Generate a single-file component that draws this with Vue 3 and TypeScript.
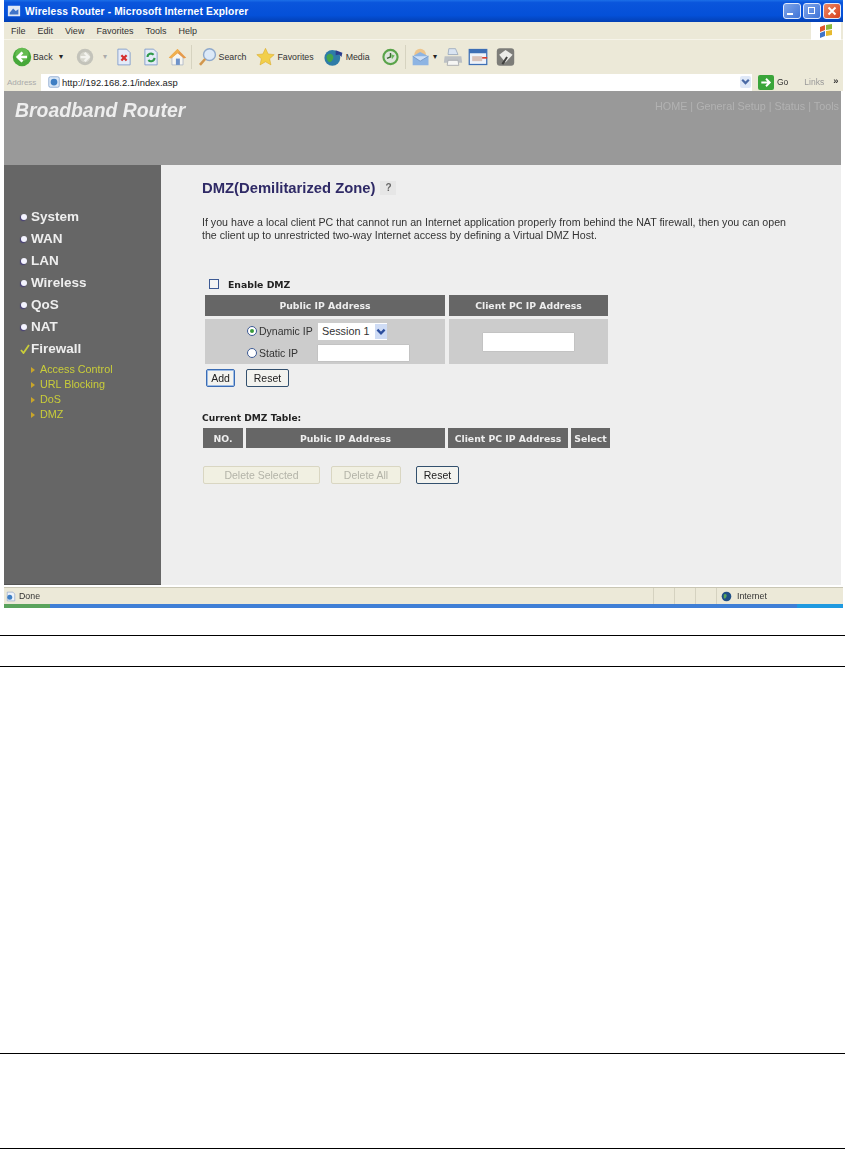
<script setup lang="ts">
const menus: string[] = ['File', 'Edit', 'View', 'Favorites', 'Tools', 'Help']
const navItems: string[] = ['System', 'WAN', 'LAN', 'Wireless', 'QoS', 'NAT']
const subItems: string[] = ['Access Control', 'URL Blocking', 'DoS', 'DMZ']
</script>

<template>
  <div class="page">
    <div class="window">
      <div class="titlebar">
        <svg class="ti" viewBox="0 0 16 16"><rect x="1" y="2" width="14" height="12" fill="#dfe8f5" /><path d="M3 10l4-5 3 3 3-2v6H3z" fill="#3f74c9" /></svg>
        <span class="ttext">Wireless Router - Microsoft Internet Explorer</span>
        <div class="wbtns">
          <span class="wb blue"><i class="min"></i></span>
          <span class="wb blue"><i class="res"></i></span>
          <span class="wb red">
            <svg viewBox="0 0 16 16"><path d="M4 4l8 8M12 4l-8 8" stroke="#fff" stroke-width="2.2" /></svg>
          </span>
        </div>
      </div>

      <div class="menubar">
        <span v-for="m in menus" :key="m" class="menu">{{ m }}</span>
        <div class="flag">
          <svg viewBox="0 0 16 16" width="16" height="16">
            <path d="M2 4l5-2v5l-5 2z" fill="#e0552c" /><path d="M8 2l6-1v5l-6 1z" fill="#8ab83a" />
            <path d="M2 10l5-2v5l-5 2z" fill="#3f74c9" /><path d="M8 8l6-1v5l-6 1z" fill="#e6b92e" />
          </svg>
        </div>
      </div>

      <div class="toolbar">
        <svg class="i-back" viewBox="0 0 24 24"><circle cx="12" cy="12" r="11" fill="#47a83a" /><circle cx="12" cy="9" r="8" fill="#7bcb62" opacity=".55" /><path d="M18 12H8M12.500 6.500L7 12l5.500 5.500" stroke="#fff" stroke-width="3.200" fill="none" /></svg>
        <span class="tlabel l-back">Back</span><span class="caret c-back">▾</span>
        <svg class="i-fwd" viewBox="0 0 24 24"><circle cx="12" cy="12" r="11" fill="#c3c3ba" /><circle cx="12" cy="12" r="7" fill="#d7d7ce" /><path d="M6 12h10M11.500 6.500L17 12l-5.500 5.500" stroke="#f3f3ee" stroke-width="3" fill="none" /></svg>
        <span class="caret dim c-fwd">▾</span>
        <svg class="i-stop" viewBox="0 0 16 20"><path d="M1 1h10l4 4v14H1z" fill="#e4ebf8" stroke="#7f9ccb" /><path d="M5 8l6 6M11 8l-6 6" stroke="#d62f2f" stroke-width="2.600" /></svg>
        <svg class="i-ref" viewBox="0 0 16 20"><path d="M1 1h10l4 4v14H1z" fill="#e4ebf8" stroke="#7f9ccb" /><path d="M4 10a4 4 0 0 1 7-2.500M12 11a4 4 0 0 1-7 2.500" stroke="#2f9a4a" stroke-width="2.400" fill="none" /></svg>
        <svg class="i-home" viewBox="0 0 24 24"><path d="M5 12l7-6 7 6v10H5z" fill="#f7f6f0" stroke="#a9b4c6" /><path d="M10 14h5v8h-5z" fill="#6f93c9" /><path d="M1 13L12 2l11 11-3 1-8-7-8 7z" fill="#e69a4b" /><path d="M1 13L12 2l3 3-10 8z" fill="#f0b04f" /></svg>
        <i class="sep s-a"></i>
        <svg class="i-search" viewBox="0 0 24 24"><circle cx="14.500" cy="9" r="7.500" fill="#dce9f8" stroke="#8fa9cb" stroke-width="1.800" /><path d="M9 14.500L2.500 22" stroke="#d2974d" stroke-width="3.200" /></svg>
        <span class="tlabel l-gap">Search</span>
        <svg class="i-star" viewBox="0 0 24 24"><path d="M12 1l3.300 7.200 7.700.8-5.800 5.200 1.700 7.800L12 18l-6.900 4 1.700-7.800L1 9l7.700-.8z" fill="#f2cf4a" stroke="#d9a92a" stroke-width=".7" /></svg>
        <span class="tlabel l-gap">Favorites</span>
        <svg class="i-media" viewBox="0 0 24 24"><circle cx="10" cy="13" r="9.500" fill="#2e7ca8" /><path d="M3 11c3-5 7-3 8 0s-2 7-4 7-4-3-4-7z" fill="#45a64a" /><path d="M14 4l8 3-1 5-3-3-4 1z" fill="#2b3f8f" /></svg>
        <span class="tlabel l-gap">Media</span>
        <svg class="i-hist" viewBox="0 0 24 24"><circle cx="12" cy="12" r="10" fill="#dfe5dc" stroke="#5aa44a" stroke-width="3" /><path d="M12 6.500V12l-5 2" stroke="#3f6a35" stroke-width="2" fill="none" /><path d="M13 8l5 2-4 5z" fill="#67b85a" /></svg>
        <i class="sep s-b"></i>
        <svg class="i-mail" viewBox="0 0 24 24"><circle cx="11" cy="9" r="7" fill="#edc58d" /><path d="M2 11l9-5 10 5v11H2z" fill="#8db4e3" /><path d="M2 11l9 6 10-6" fill="#cfe0f5" stroke="#6d93c4" /></svg>
        <span class="caret c-mail">▾</span>
        <svg class="i-print" viewBox="0 0 24 24"><path d="M7 2h8l3 7H6z" fill="#d9e4f2" stroke="#9aa9bd" /><path d="M2 11h20l1 8H1z" fill="#bcc0c4" /><path d="M6 16h12l1 6H5z" fill="#f6f6f4" stroke="#a3a7ab" /></svg>
        <svg class="i-edit" viewBox="0 0 24 24"><rect x="1.500" y="3" width="21" height="18" fill="#eef3fa" stroke="#3d6fb5" stroke-width="1.500" /><rect x="1.500" y="3" width="21" height="4.500" fill="#3d6fb5" /><path d="M5 11h12v6H5z" fill="#d8c1b8" /><path d="M17 13h6" stroke="#d9402f" stroke-width="2" /></svg>
        <svg class="i-msg" viewBox="0 0 24 24"><rect x="1" y="1" width="22" height="22" rx="4" fill="#7d7d79" /><path d="M4 9l8-6 9 6-9 10z" fill="#ecece8" /><path d="M8 21l6-9" stroke="#3f3f3d" stroke-width="2.500" /></svg>
      </div>

      <div class="addressbar">
        <span class="addr">Address</span>
        <div class="urlbox">
          <svg class="ie" viewBox="0 0 16 16"><rect x="1" y="1" width="14" height="14" rx="2" fill="#dbe8f7" stroke="#7f9fc9" /><circle cx="8" cy="8" r="4.500" fill="#3f7fc4" /></svg>
          <span class="url">http://192.168.2.1/index.asp</span>
          <span class="drop">
            <svg viewBox="0 0 10 10"><path d="M2 3l3 3 3-3" stroke="#4a6aa5" stroke-width="2" fill="none" /></svg>
          </span>
        </div>
        <span class="go">
          <svg viewBox="0 0 16 16"><path d="M3 8h9M8 4l4 4-4 4" stroke="#fff" stroke-width="2" fill="none" /></svg>
        </span>
        <span class="golabel">Go</span>
        <span class="links">Links</span>
        <span class="more">»</span>
      </div>

      <div class="header">
        <span class="brand">Broadband Router</span>
        <span class="topnav">HOME | General Setup | Status | Tools</span>
      </div>

      <div class="main">
        <aside class="sidebar">
          <ul class="nav">
            <li v-for="n in navItems" :key="n"><i class="dot"></i>{{ n }}</li>
            <li>
              <svg class="check" viewBox="0 0 10 10"><path d="M1 6l2.500 3L9 1" stroke="#c9cd3a" stroke-width="1.800" fill="none" /></svg>Firewall
            </li>
          </ul>
          <ul class="subnav">
            <li v-for="s in subItems" :key="s"><i class="tri"></i>{{ s }}</li>
          </ul>
        </aside>

        <section class="content">
          <div class="heading">
            <h1>DMZ(Demilitarized Zone)</h1>
            <span class="help">?</span>
          </div>
          <p class="intro">
            If you have a local client PC that cannot run an Internet application properly from behind the NAT firewall, then you can open<br />
            the client up to unrestricted two-way Internet access by defining a Virtual DMZ Host.
          </p>

          <div class="form">
            <label class="enable"><i class="cb"></i><span>Enable DMZ</span></label>
            <div class="grid1">
              <div class="th">Public IP Address</div>
              <div class="th">Client PC IP Address</div>
              <div class="cell left">
                <div class="ipgrid">
                  <span class="radioline"><i class="radio on"></i>Dynamic IP</span>
                  <span class="select">Session 1<i class="selbtn"><svg viewBox="0 0 10 10"><path d="M2 3.500l3 3 3-3" stroke="#2d4f9e" stroke-width="2" fill="none" /></svg></i></span>
                  <span class="radioline"><i class="radio"></i>Static IP</span>
                  <span class="input wide"></span>
                </div>
              </div>
              <div class="cell center"><span class="input client"></span></div>
            </div>
            <div class="btnrow">
              <button class="btn primary" type="button">Add</button>
              <button class="btn" type="button">Reset</button>
            </div>

            <div class="tabletitle">Current DMZ Table:</div>
            <div class="grid2">
              <div class="th">NO.</div>
              <div class="th">Public IP Address</div>
              <div class="th">Client PC IP Address</div>
              <div class="th">Select</div>
            </div>
            <div class="btnrow2">
              <button class="btn disabled ds" type="button">Delete Selected</button>
              <button class="btn disabled da" type="button">Delete All</button>
              <button class="btn" type="button">Reset</button>
            </div>
          </div>
        </section>
      </div>

      <div class="statusbar">
        <svg class="ie st" viewBox="0 0 16 16"><path d="M2 1h9l3 3v11H2z" fill="#eef3fa" stroke="#8aa0c8" /><circle cx="6" cy="9" r="4" fill="#3f7fc4" /></svg>
        <span class="done">Done</span>
        <div class="panes"><i></i><i></i><i></i></div>
        <div class="zone">
          <svg viewBox="0 0 16 16" width="11" height="11"><circle cx="8" cy="8" r="7" fill="#1f4f86" /><path d="M4 5c3-2 5 0 4 3s-3 4-4 2z" fill="#5aa65a" /></svg>
          <span>Internet</span>
        </div>
      </div>
      <div class="taskstrip"><i class="startpart"></i><i class="traypart"></i></div>
    </div>

    <div class="rules">
      <div class="rule r1"></div>
      <div class="rule r2"></div>
      <div class="rule r3"></div>
      <div class="rule r4"></div>
    </div>
  </div>
</template>

<style>
html, body { margin: 0; background: #fff; }
</style>

<style scoped>
.page {
  width: 845px;
  height: 1149px;
  overflow: hidden;
  background: #fff;
  font-family: "Liberation Sans", Arial, sans-serif;
}
.window {
  margin-left: 4px;
  width: 839px;
  height: 608px;
  display: flex;
  flex-direction: column;
  filter: blur(0.55px);
}
.titlebar {
  height: 22px;
  flex: none;
  display: flex;
  align-items: center;
  padding-left: 3px;
  background: linear-gradient(#1c6fe8 0, #0a55dc 12%, #0450d8 70%, #0340b4 100%);
  color: #fff;
}
.ti { width: 14px; height: 14px; margin-right: 4px; }
.ttext { font-size: 10.200px; font-weight: 700; letter-spacing: .15px; }
.wbtns { margin-left: auto; display: flex; gap: 2px; padding-right: 2px; }
.wb { width: 18px; height: 16px; border-radius: 3px; border: 1px solid #dfe9fb; box-sizing: border-box; position: relative; display: block; }
.wb.blue { background: linear-gradient(135deg, #7fa5e8, #3f74d8); }
.wb.red { background: linear-gradient(135deg, #ec8a66, #d83f1c); }
.wb svg { width: 100%; height: 100%; display: block; }
.min { position: absolute; left: 3px; bottom: 3px; width: 6px; height: 2px; background: #fff; }
.res { position: absolute; left: 4px; top: 3px; width: 7px; height: 7px; border: 1.500px solid #fff; box-sizing: border-box; }
.menubar {
  height: 18px;
  flex: none;
  display: flex;
  align-items: center;
  padding-left: 7px;
  gap: 12px;
  background: #ece9d8;
  font-size: 9px;
  color: #333;
  border-bottom: 1px solid #f6f4ea;
  box-sizing: border-box;
}
.flag { margin-left: auto; width: 30px; height: 18px; background: #fff; display: flex; align-items: center; justify-content: center; margin-right: 2px; }
.toolbar {
  height: 33px;
  flex: none;
  display: flex;
  align-items: center;
  padding-left: 8px;
  background: #ece9d8;
  box-sizing: border-box;
}
.toolbar svg { flex: none; height: 20px; }
.tlabel { font-size: 8.800px; color: #333; flex: none; }
.caret { font-size: 8px; color: #222; width: 5px; flex: none; text-align: center; }
.caret.dim { color: #aaa; }
.i-back { width: 20px; }
.l-back { margin-left: 1px; }
.c-back { margin-left: 6px; }
.i-fwd { width: 18px; margin-left: 12px; }
.c-fwd { margin-left: 9px; }
.i-stop { width: 14px; margin-left: 9px; }
.i-ref { width: 14px; margin-left: 13px; }
.i-home { width: 19px; margin-left: 10px; }
.s-a { margin-left: 4px; }
.i-search { width: 19px; margin-left: 6px; }
.l-gap { margin-left: 2px; }
.i-star { width: 19px; margin-left: 10px; }
.i-media { width: 20px; margin-left: 10px; }
.i-hist { width: 17px; margin-left: 12px; }
.s-b { margin-left: 6px; }
.i-mail { width: 20px; margin-left: 5px; }
.c-mail { margin-left: 2px; }
.i-print { width: 20px; margin-left: 5px; }
.i-edit { width: 20px; margin-left: 5px; }
.i-msg { width: 19px; margin-left: 8px; }
.sep { width: 1px; height: 24px; background: #d6d3c0; flex: none; }
.addressbar {
  height: 18px;
  flex: none;
  display: flex;
  align-items: center;
  background: #ece9d8;
  font-size: 9.400px;
  color: #333;
}
.addr { color: #aaa; width: 37px; padding-left: 3px; box-sizing: border-box; font-size: 8px; flex: none; }
.urlbox {
  width: 711px;
  height: 17px;
  background: #fff;
  display: flex;
  align-items: center;
  padding-left: 7px;
  box-sizing: border-box;
  flex: none;
}
.ie { width: 12px; height: 12px; flex: none; }
.url { margin-left: 2px; color: #222; }
.drop { margin-left: auto; width: 11px; height: 12px; margin-right: 1px; background: #dfe8f7; border-radius: 2px; display: block; }
.drop svg { width: 100%; height: 100%; display: block; }
.go { margin-left: 6px; width: 16px; height: 15px; background: #3aa53a; border-radius: 2px; display: block; flex: none; }
.go svg { width: 100%; height: 100%; display: block; }
.golabel { margin-left: 3px; font-size: 8.500px; }
.links { margin-left: 16px; color: #999; font-size: 8.500px; }
.more { margin-left: 9px; font-weight: 700; margin-top: -4px; }
.header {
  height: 74px;
  flex: none;
  margin-right: 2px;
  background: #999;
  display: flex;
  justify-content: space-between;
  align-items: flex-start;
  padding: 8px 2px 0 11px;
  box-sizing: border-box;
}
.brand { color: #eee; font-size: 19.400px; font-style: italic; font-weight: 700; line-height: 22px; }
.topnav { color: #b2b2b2; font-size: 10.800px; line-height: 12px; margin-top: 1px; }
.main { flex: 1; display: flex; min-height: 0; margin-right: 2px; }
.sidebar {
  width: 157px;
  flex: none;
  background: #666;
  padding: 41px 0 0 15px;
  box-sizing: border-box;
  border-bottom: 1px solid #555;
}
.nav, .subnav { list-style: none; margin: 0; padding: 0; }
.nav li {
  height: 22px;
  line-height: 22px;
  color: #eee;
  font-size: 13.500px;
  font-weight: 700;
  display: flex;
  align-items: center;
}
.dot { width: 6px; height: 6px; border-radius: 50%; background: #f4f4ff; box-shadow: -1px 1px 1px rgba(59, 47, 128, .7); margin: 0 4px 0 2px; flex: none; }
.check { width: 10px; height: 10px; margin-right: 1px; flex: none; margin-left: 1px; }
.subnav { padding-left: 12px; padding-top: 2px; }
.subnav li {
  height: 15px;
  line-height: 15px;
  color: #c9cd3a;
  font-size: 10.800px;
  display: flex;
  align-items: center;
  white-space: nowrap;
}
.tri { width: 0; height: 0; border-left: 4px solid #c9a52a; border-top: 3px solid transparent; border-bottom: 3px solid transparent; margin-right: 5px; flex: none; }
.content {
  flex: 1;
  background: #eee;
  padding: 14px 0 0 41px;
  box-sizing: border-box;
  color: #222;
}
.heading { display: flex; align-items: center; height: 18px; }
h1 { margin: 0; font-size: 14.800px; line-height: 18px; font-weight: 700; color: #2f2a66; white-space: nowrap; }
.help { margin-left: 5px; width: 16px; height: 14px; font-size: 10px; line-height: 14px; text-align: center; color: #666; font-weight: 700; background: #e6e6e6; }
.intro { margin: 19px 0 0; font-size: 10.650px; line-height: 13px; color: #333; white-space: nowrap; }
.form { margin-top: 35px; margin-left: 3px; }
.enable { display: flex; align-items: center; height: 14px; font-size: 9.300px; font-weight: 700; color: #222; font-family: "DejaVu Sans", "Liberation Sans", sans-serif; }
.cb { width: 10px; height: 10px; background: #f5f5f5; border: 1px solid #3d5a94; box-sizing: border-box; margin: 0 9px 0 4px; flex: none; }
.grid1 { display: grid; grid-template-columns: 240px 159px; column-gap: 4px; row-gap: 3px; margin-top: 4px; }
.th {
  background: #666;
  color: #eee;
  height: 21px;
  font-size: 9.300px;
  font-weight: 700;
  font-family: "DejaVu Sans", "Liberation Sans", sans-serif;
  display: flex;
  align-items: center;
  justify-content: center;
  white-space: nowrap;
}
.cell { background: #ccc; height: 45px; display: flex; align-items: center; }
.center { justify-content: center; }
.left { padding-left: 42px; box-sizing: border-box; }
.ipgrid { display: grid; grid-template-columns: 71px auto; row-gap: 5px; align-items: center; font-size: 10.500px; color: #333; }
.radioline { display: flex; align-items: center; white-space: nowrap; }
.radio { width: 10px; height: 10px; border-radius: 50%; background: #fff; border: 1px solid #3d5a94; box-sizing: border-box; margin-right: 2px; flex: none; position: relative; }
.radio.on::after { content: ""; position: absolute; left: 2px; top: 2px; width: 4px; height: 4px; border-radius: 50%; background: #3a9a3a; }
.select { width: 69px; height: 17px; background: #fff; display: flex; align-items: center; padding-left: 4px; box-sizing: border-box; position: relative; font-size: 10.800px; }
.selbtn { position: absolute; right: 0; top: 1px; width: 12px; height: 15px; background: #cfdcf5; display: block; }
.selbtn svg { width: 100%; height: 100%; display: block; }
.input { display: block; background: #fff; box-shadow: 0 0 1px #999; }
.wide { width: 91px; height: 16px; }
.client { width: 91px; height: 18px; }
.btnrow { display: flex; gap: 11px; margin-top: 5px; margin-left: 1px; }
.btn {
  height: 18px;
  padding: 0;
  background: #f3f3ef;
  border: 1px solid #33506e;
  border-radius: 2px;
  font-family: "Liberation Sans", Arial, sans-serif;
  font-size: 10.500px;
  color: #222;
  line-height: 15px;
  flex: none;
}
.btnrow .btn { width: 43px; }
.btnrow .primary { width: 29px; border-color: #3a6cb4; box-shadow: inset 0 0 0 1px #9dbce6; }
.tabletitle { font-size: 9.100px; font-weight: 700; color: #222; font-family: "DejaVu Sans", "Liberation Sans", sans-serif; margin-top: 25px; margin-left: -3px; line-height: 13px; }
.grid2 { display: grid; grid-template-columns: 40px 199px 120px 39px; column-gap: 3px; margin-top: 3px; margin-left: -2px; }
.grid2 .th { height: 20px; }
.btnrow2 { display: flex; gap: 11px; margin-top: 18px; margin-left: -2px; }
.disabled { background: #f1f0e2; border-color: #d9d6c2; color: #b3b3a8; }
.ds { width: 117px; }
.da { width: 70px; margin-right: 4px; }
.btnrow2 .btn:last-child { width: 43px; border-color: #33506e; }
.statusbar {
  height: 17px;
  flex: none;
  display: flex;
  align-items: center;
  background: #ece9d8;
  font-size: 8.800px;
  color: #333;
  padding-left: 2px;
  margin-top: 2px;
  box-sizing: border-box;
  border-top: 1px solid #c9c6b4;
}
.st { width: 10px; height: 11px; }
.done { margin-left: 3px; }
.panes { margin-left: auto; display: flex; height: 100%; }
.panes i { width: 20px; border-left: 1px solid #d5d2c0; display: block; }
.zone { width: 127px; display: flex; align-items: center; gap: 5px; padding-left: 4px; box-sizing: border-box; border-left: 1px solid #d5d2c0; height: 100%; }
.taskstrip { height: 4px; flex: none; background: #3f7fd6; display: flex; justify-content: space-between; }
.startpart { width: 46px; background: #5aa35c; display: block; }
.traypart { width: 46px; background: #1f9ae0; display: block; }
.rule { height: 1px; background: #000; }
.r1 { margin-top: 27px; }
.r2 { margin-top: 30px; }
.r3 { margin-top: 386px; }
.r4 { margin-top: 94px; }
</style>
